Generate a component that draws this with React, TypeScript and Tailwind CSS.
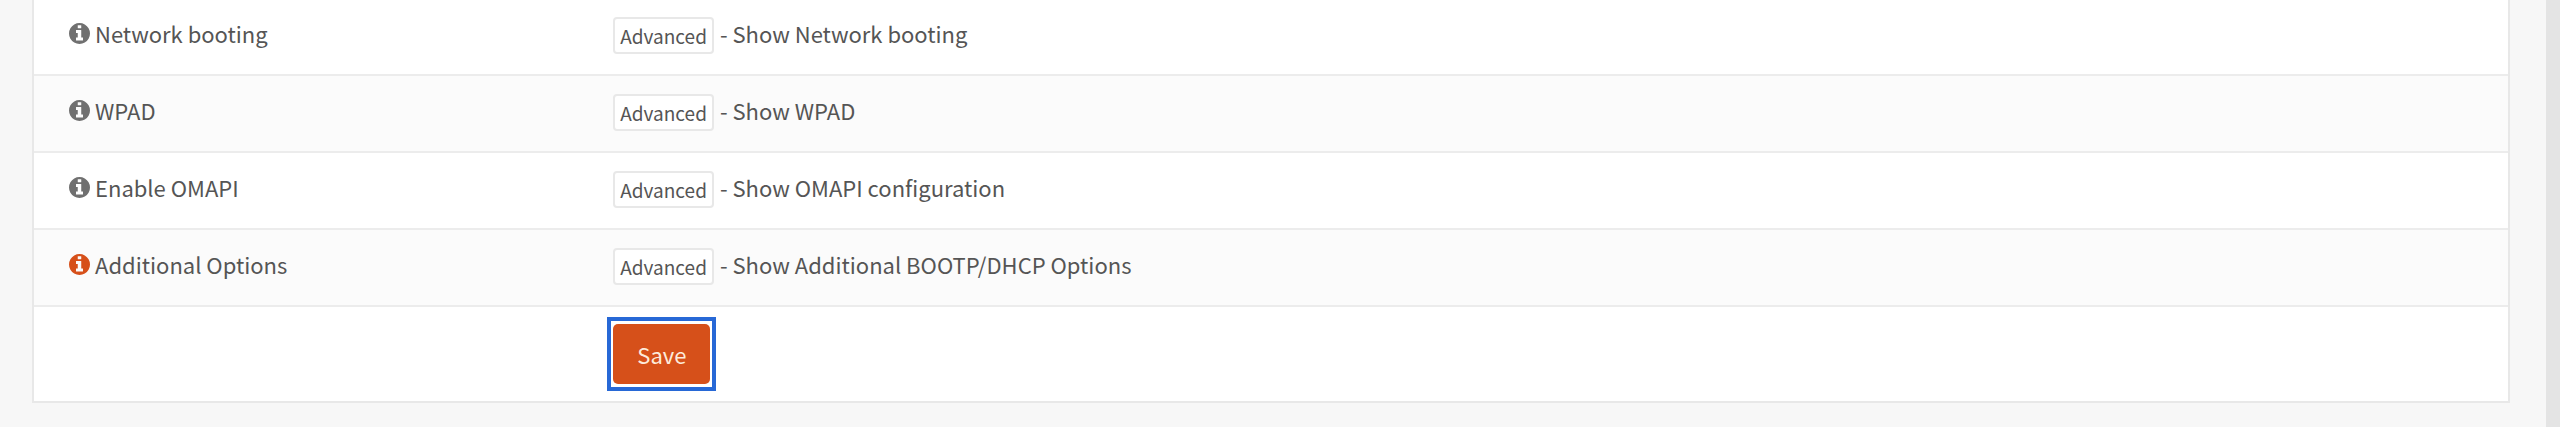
type Option = { label: string; hint: string; active?: boolean }

const options: Option[] = [
  { label: "Network booting", hint: "Show Network booting" },
  { label: "WPAD", hint: "Show WPAD" },
  { label: "Enable OMAPI", hint: "Show OMAPI configuration" },
  { label: "Additional Options", hint: "Show Additional BOOTP/DHCP Options", active: true },
]

function InfoIcon({ active }: { active?: boolean }) {
  return (
    <svg
      viewBox="128 128 1536 1536"
      className={`size-[21px] shrink-0 ${active ? "text-[#d6501a]" : "text-[#707070]"}`}
      fill="currentColor"
      aria-hidden="true"
    >
      <path d="M1152 1376v-160q0-14-9-23t-23-9h-96v-512q0-14-9-23t-23-9h-320q-14 0-23 9t-9 23v160q0 14 9 23t23 9h96v320h-96q-14 0-23 9t-9 23v160q0 14 9 23t23 9h448q14 0 23-9t9-23zm-128-896v-160q0-14-9-23t-23-9h-192q-14 0-23 9t-9 23v160q0 14 9 23t23 9h192q14 0 23-9t9-23zm640 416q0 209-103 385.5t-279.5 279.5-385.5 103-385.5-103-279.5-279.5-103-385.5 103-385.5 279.5-279.5 385.5-103 385.5 103 279.5 279.5 103 385.5z" />
    </svg>
  )
}

function OptionRow({ option }: { option: Option }) {
  return (
    <tr className="border-b-2 border-[#ececec] align-top even:bg-[#fbfbfb]">
      <th scope="row" className="w-[22%] px-[35px] pt-[18px] pb-5 text-left font-normal">
        <div className="flex items-center gap-[5px]">
          <InfoIcon active={option.active} />
          <span>{option.label}</span>
        </div>
      </th>
      <td className="px-[35px] pt-[18px] pb-5">
        <div className="flex items-start gap-1.5">
          <button
            type="button"
            className="rounded-sm border-2 border-[#e8e8e8] bg-white px-[5px] text-[19px] leading-[33px]"
          >
            Advanced
          </button>
          <span>- {option.hint}</span>
        </div>
      </td>
    </tr>
  )
}

export default function App() {
  return (
    <div className="flex min-h-screen bg-[#f7f7f7] font-['Noto_Sans_CJK_SC','Noto_Sans',sans-serif] text-[22px] leading-8 text-[#555]">
      <main className="flex-1 pr-9 pb-6 pl-8">
        <form
          className="-mt-px border-x-2 border-b-2 border-[#e8e8e8] bg-white"
          onSubmit={(e) => e.preventDefault()}
        >
          <table className="w-full border-collapse">
            <tbody>
              {options.map((option) => (
                <OptionRow key={option.label} option={option} />
              ))}
              <tr>
                <td />
                <td className="px-[29px] py-2.5">
                  {/* square focus frame around the rounded label */}
                  <button
                    type="submit"
                    className="block border-4 border-[#2768d6] bg-white px-0.5 py-[3px] outline-none"
                  >
                    <span className="block rounded-[5px] bg-[#d6501a] px-6 py-3.5 text-[#fdebdc]">
                      Save
                    </span>
                  </button>
                </td>
              </tr>
            </tbody>
          </table>
        </form>
      </main>
      <div className="w-3.5 bg-[#e4e4e4]" />
    </div>
  )
}
